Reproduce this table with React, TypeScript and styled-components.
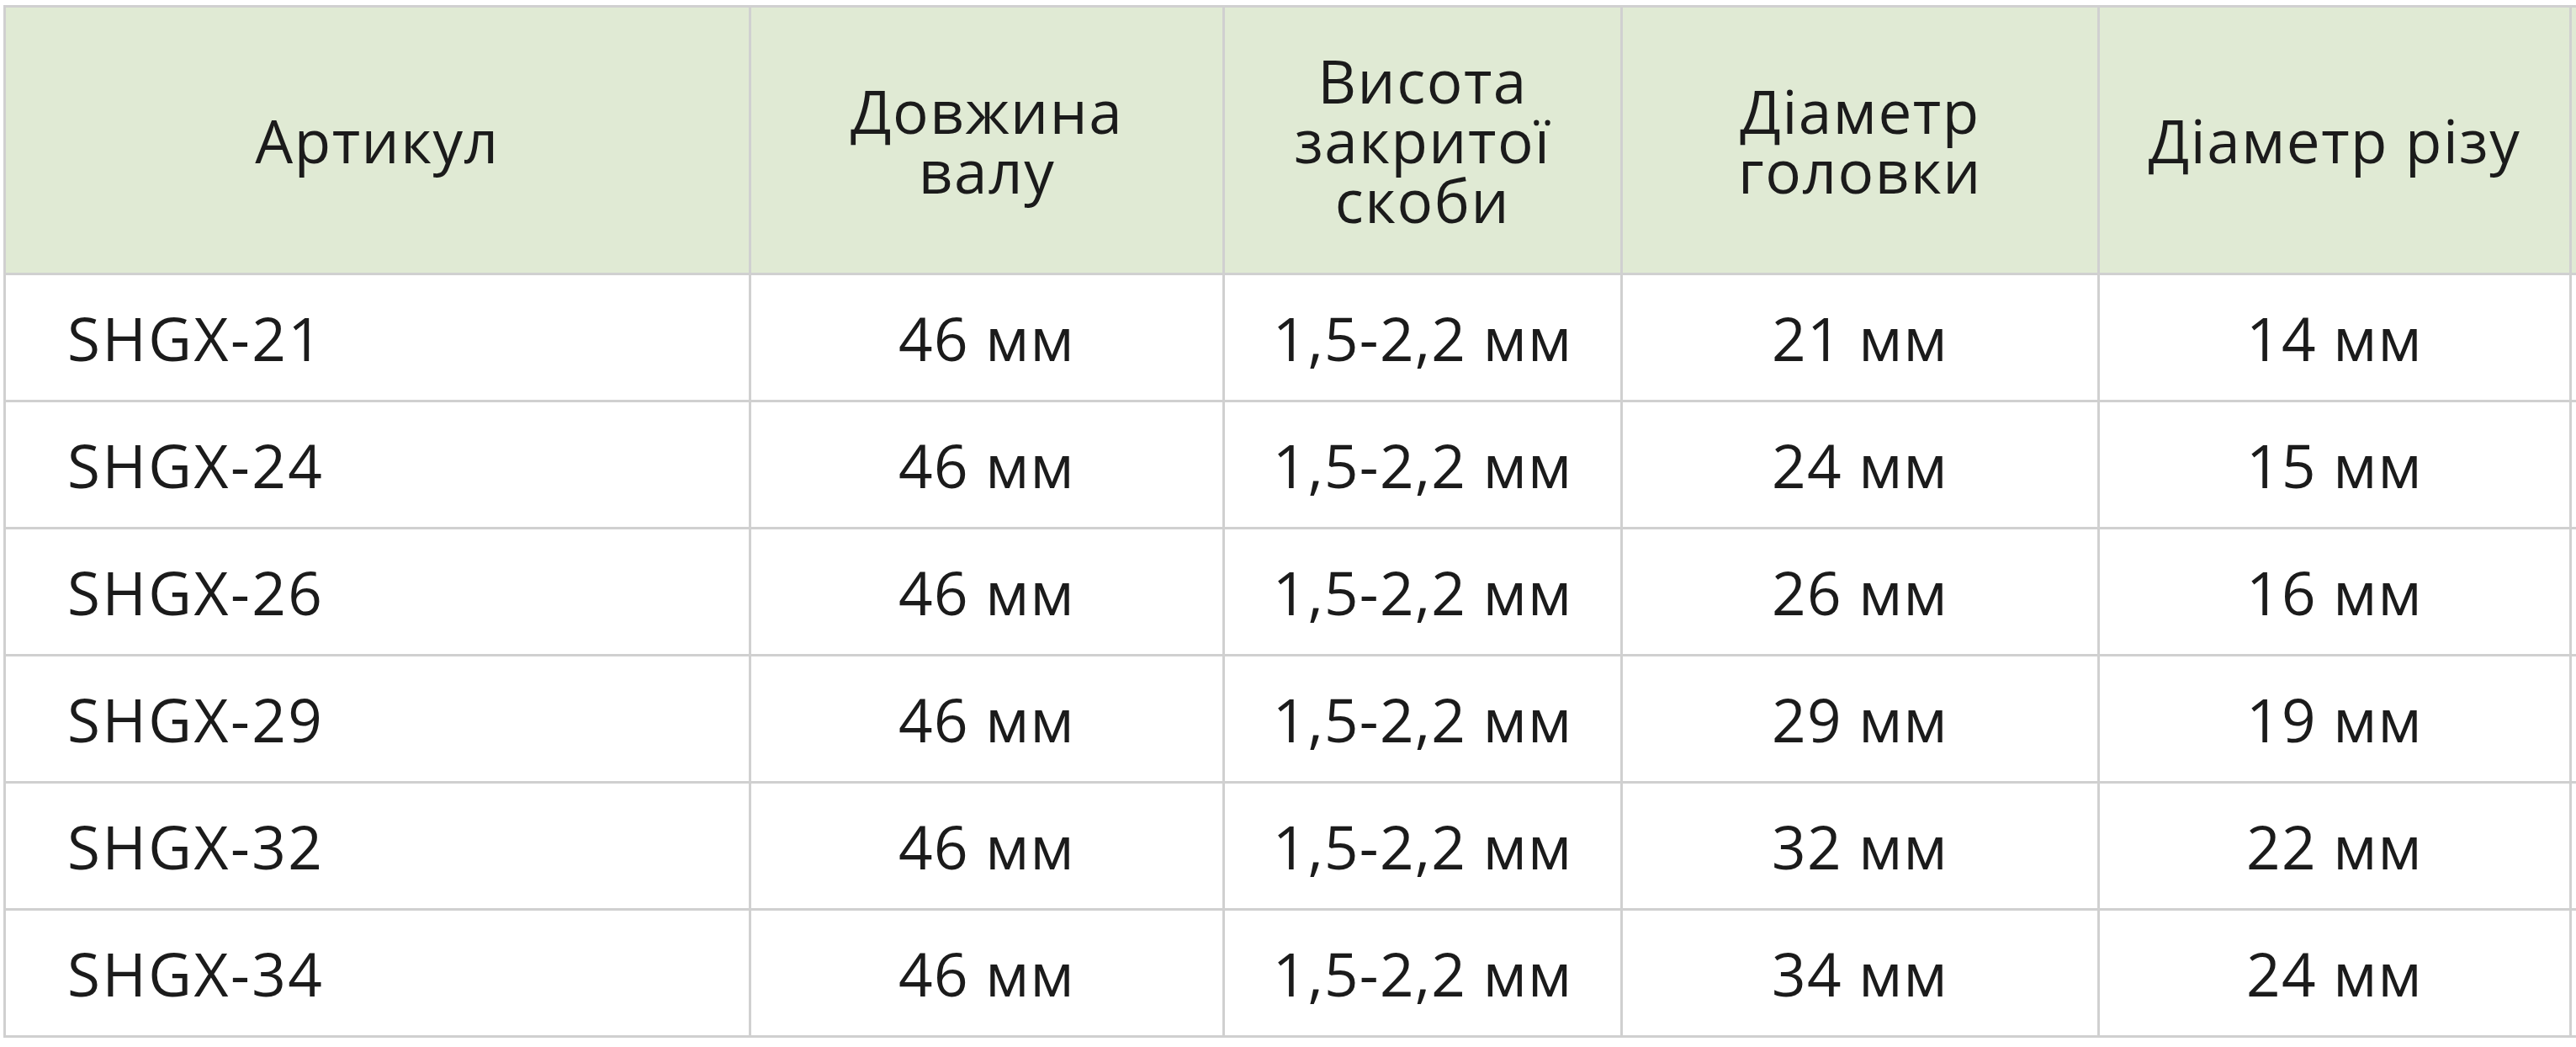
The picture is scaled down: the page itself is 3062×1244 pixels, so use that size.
import { Fragment } from "react";
import styled, { createGlobalStyle } from "styled-components";

const GlobalStyle = createGlobalStyle`
  html, body {
    margin: 0;
    padding: 0;
    background: #ffffff;
    overflow: hidden;
  }
  body {
    font-family: "Open Sans", "Liberation Sans", sans-serif;
    color: #1b1b1b;
  }
`;

const headers: string[][] = [
  ["Артикул"],
  ["Довжина", "валу"],
  ["Висота", "закритої", "скоби"],
  ["Діаметр", "головки"],
  ["Діаметр різу"],
  [""],
];

const rows = [
  ["SHGX-21", "46 мм", "1,5-2,2 мм", "21 мм", "14 мм", ""],
  ["SHGX-24", "46 мм", "1,5-2,2 мм", "24 мм", "15 мм", ""],
  ["SHGX-26", "46 мм", "1,5-2,2 мм", "26 мм", "16 мм", ""],
  ["SHGX-29", "46 мм", "1,5-2,2 мм", "29 мм", "19 мм", ""],
  ["SHGX-32", "46 мм", "1,5-2,2 мм", "32 мм", "22 мм", ""],
  ["SHGX-34", "46 мм", "1,5-2,2 мм", "34 мм", "24 мм", ""],
];

const TableGrid = styled.div`
  display: grid;
  grid-template-columns: 883px 560px 470px 564px 558px 400px;
  grid-template-rows: 315px;
  grid-auto-rows: 148px;
  gap: 3px;
  padding: 3px;
  margin: 6px 0 0 4px;
  width: max-content;
  background: #d0d0d0;
`;

const HeadCell = styled.div`
  display: flex;
  align-items: center;
  justify-content: center;
  background: #e0ead4;
  font-size: 71px;
  line-height: 71px;
  letter-spacing: 1.5px;
  text-align: center;
`;

const BodyCell = styled.div<{ $left?: boolean }>`
  display: flex;
  align-items: center;
  justify-content: ${(p) => (p.$left ? "flex-start" : "center")};
  padding-left: ${(p) => (p.$left ? "73px" : "0")};
  background: #ffffff;
  font-size: 71px;
  letter-spacing: ${(p) => (p.$left ? "2.5px" : "1.2px")};
  white-space: nowrap;
`;

export default function App() {
  return (
    <>
      <GlobalStyle />
      <TableGrid>
        {headers.map((lines, i) => (
          <HeadCell key={`h${i}`}>
            <div>
              {lines.map((line, j) => (
                <Fragment key={j}>
                  {j > 0 && <br />}
                  {line}
                </Fragment>
              ))}
            </div>
          </HeadCell>
        ))}
        {rows.map((row, r) =>
          row.map((value, c) => (
            <BodyCell key={`${r}-${c}`} $left={c === 0}>
              {value}
            </BodyCell>
          ))
        )}
      </TableGrid>
    </>
  );
}
